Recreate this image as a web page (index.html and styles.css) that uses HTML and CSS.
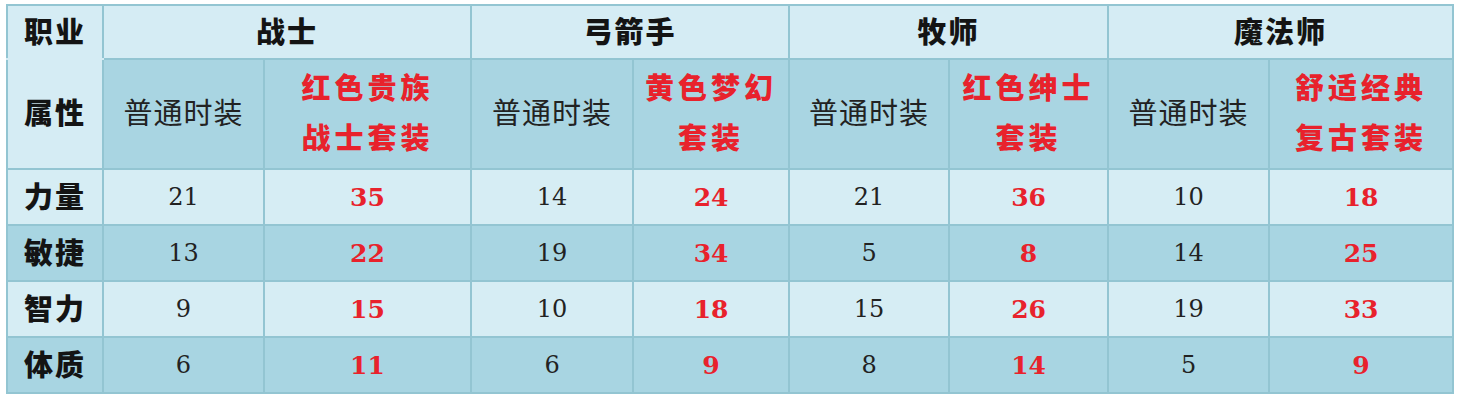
FILE: index.html
```html
<!DOCTYPE html>
<html lang="zh">
<head>
<meta charset="utf-8">
<title>职业时装属性</title>
<link rel="stylesheet" href="styles.css">
</head>
<body>
<table class="stats">
  <colgroup>
    <col class="c-label">
    <col class="c-w1"><col class="c-w2">
    <col class="c-a1"><col class="c-a2">
    <col class="c-p1"><col class="c-p2">
    <col class="c-m1"><col class="c-m2">
  </colgroup>
  <thead>
    <tr class="row-class">
      <th class="label top">职业</th>
      <th colspan="2">战士</th>
      <th colspan="2">弓箭手</th>
      <th colspan="2">牧师</th>
      <th colspan="2">魔法师</th>
    </tr>
    <tr class="row-suit">
      <th class="label bottom">属性</th>
      <td class="plain">普通时装</td>
      <td class="special">红色贵族<br>战士套装</td>
      <td class="plain">普通时装</td>
      <td class="special">黄色梦幻<br>套装</td>
      <td class="plain">普通时装</td>
      <td class="special">红色绅士<br>套装</td>
      <td class="plain">普通时装</td>
      <td class="special">舒适经典<br>复古套装</td>
    </tr>
  </thead>
  <tbody>
    <tr class="light">
      <th class="label">力量</th>
      <td class="num">21</td><td class="num red">35</td>
      <td class="num">14</td><td class="num red">24</td>
      <td class="num">21</td><td class="num red">36</td>
      <td class="num">10</td><td class="num red">18</td>
    </tr>
    <tr class="dark">
      <th class="label">敏捷</th>
      <td class="num">13</td><td class="num red">22</td>
      <td class="num">19</td><td class="num red">34</td>
      <td class="num">5</td><td class="num red">8</td>
      <td class="num">14</td><td class="num red">25</td>
    </tr>
    <tr class="light">
      <th class="label">智力</th>
      <td class="num">9</td><td class="num red">15</td>
      <td class="num">10</td><td class="num red">18</td>
      <td class="num">15</td><td class="num red">26</td>
      <td class="num">19</td><td class="num red">33</td>
    </tr>
    <tr class="dark">
      <th class="label">体质</th>
      <td class="num">6</td><td class="num red">11</td>
      <td class="num">6</td><td class="num red">9</td>
      <td class="num">8</td><td class="num red">14</td>
      <td class="num">5</td><td class="num red">9</td>
    </tr>
  </tbody>
</table>
</body>
</html>
```
FILE: styles.css
```css
html, body {
  margin: 0;
  background: #ffffff;
}

body {
  padding: 4px 6px 0 6px;
  font-family: "Noto Sans CJK SC", "Noto Sans", sans-serif;
  color: #1c1c1c;
}

.stats {
  border-collapse: collapse;
  table-layout: fixed;
  width: 1448px;
  border: 2px solid #8fb7c2;
}

.c-label { width: 96px; }
.c-w1 { width: 161px; }
.c-w2 { width: 207px; }
.c-a1 { width: 162px; }
.c-a2 { width: 156px; }
.c-p1 { width: 160px; }
.c-p2 { width: 159px; }
.c-m1 { width: 161px; }
.c-m2 { width: 184px; }

.stats th,
.stats td {
  border: 2px solid #93c5d2;
  padding: 0 0 4px 0;
  text-align: center;
  vertical-align: middle;
}

.stats th {
  font-weight: 900;
  font-size: 29px;
  letter-spacing: 2px;
  color: #141414;
}

.row-class {
  height: 54px;
  background: #d5ecf4;
}

.row-suit {
  height: 110px;
  background: #a9d5e2;
}

.row-suit th,
.row-suit td {
  padding-bottom: 6px;
}

.row-suit .label {
  background: #d5ecf4;
}

.label.top {
  border-bottom-color: #d5ecf4;
}

.label.bottom {
  border-top-color: #d5ecf4;
}

.plain {
  font-size: 29px;
  font-weight: 400;
  color: #222;
  letter-spacing: 1px;
}

.special {
  font-size: 29px;
  font-weight: 900;
  color: #e8222c;
  letter-spacing: 4px;
  line-height: 50px;
}

.light {
  height: 56px;
  background: #d6edf4;
}

.dark {
  height: 56px;
  background: #a8d5e2;
}

.stats td.num {
  font-family: "DejaVu Serif", "Liberation Serif", serif;
  font-size: 24px;
  color: #222;
  padding-bottom: 0;
}

.stats td.num.red {
  font-weight: 700;
  color: #e8222c;
  font-size: 25px;
}
```
